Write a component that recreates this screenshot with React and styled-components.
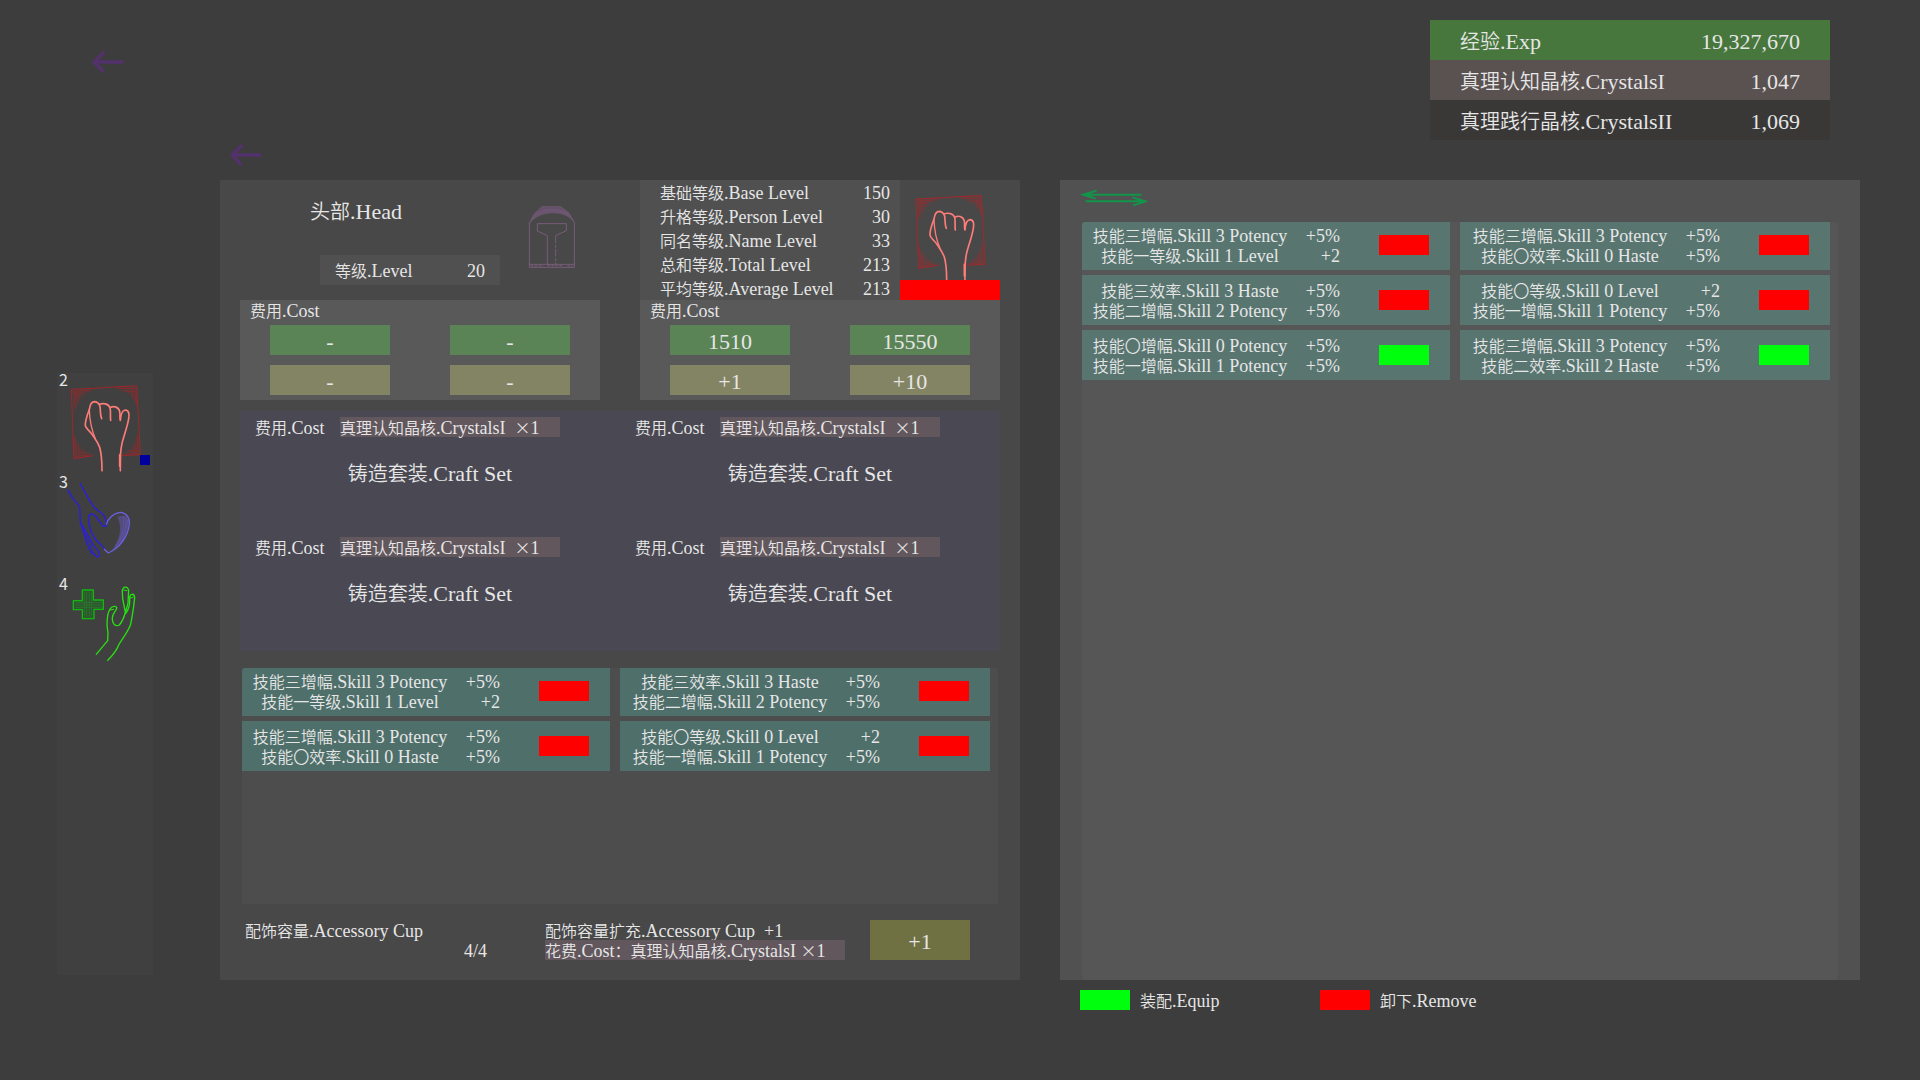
import React from "react";
import styled, { createGlobalStyle } from "styled-components";

const GlobalStyle = createGlobalStyle`
    * {
        box-sizing: border-box;
    }
    body {
        margin: 0;
        background: #3d3d3d;
        color: #e6e6e6;
        font-family: "Noto Sans CJK SC", sans-serif;
        font-size: 16px;
        line-height: 20px;
    }
    button {
        border: 0;
        padding: 0;
        background: none;
        color: inherit;
        font: inherit;
        cursor: pointer;
    }
    svg {
        display: block;
        fill: none;
    }
    dl, dt, dd, h1, h2, ul {
        margin: 0;
        padding: 0;
        font-weight: normal;
        list-style: none;
    }
`;

const Latin = styled.span`
    font-family: "Liberation Serif", serif;
    font-size: ${props => (props.$big ? 22 : 18)}px;
    line-height: 0;
`;

const Line = styled.span`
    font-size: ${props => (props.$big ? 20 : 16)}px;
    font-weight: 350;
    white-space: pre;
`;

// Latin letters are set in a serif, a little larger than the Chinese beside them
const Text = ({ children, big }) => (
    <Line $big={big}>
        {children
            .split(/([\u2e80-\u9fff\uff1a×]+)/)
            .filter(part => part)
            .map((part, index) =>
                /[\u2e80-\u9fff\uff1a×]/.test(part) ? (
                    part
                ) : (
                    <Latin key={index} $big={big}>
                        {part}
                    </Latin>
                )
            )}
    </Line>
);

const Page = styled.div`
    min-height: 100vh;
`;

const Header = styled.header`
    display: flex;
    justify-content: space-between;
    align-items: flex-start;
    padding: 20px 90px 0 91px;
`;

const BackButton = styled.button`
    display: block;
    margin-top: ${props => props.$top}px;
`;

const Resources = styled.dl`
    width: 400px;
`;

const Resource = styled.div`
    display: flex;
    justify-content: space-between;
    align-items: center;
    height: 40px;
    padding: 2px 30px 0;
    background: ${props => props.$color};
`;

const SubHeader = styled.div`
    display: flex;
    height: 40px;
    padding-left: 229px;
`;

const Main = styled.main`
    display: flex;
    align-items: flex-start;
    padding: 0 60px 0 57px;
`;

const Sidebar = styled.nav`
    flex: none;
    width: 96px;
    min-height: 602px;
    margin: 193px 67px 0 0;
    background: #404040;
`;

const ClassButton = styled.button`
    display: block;
    position: relative;
    width: 96px;
    height: 102px;
`;

const ClassNumber = styled.span`
    position: absolute;
    top: -4px;
    left: 2px;
    font-size: 16px;
`;

const Selected = styled.span`
    position: absolute;
    top: 82px;
    right: 3px;
    width: 10px;
    height: 10px;
    background: #00009c;
`;

const Columns = styled.div`
    flex: 1;
    display: grid;
    grid-template-columns: 1fr 1fr;
    align-items: start;
    gap: 40px;
`;

const Panel = styled.section`
    display: flex;
    flex-direction: column;
    min-height: 800px;
    background: ${props => props.$color};
    padding: ${props => props.$padding};
`;

const Halves = styled.div`
    display: grid;
    grid-template-columns: 1fr 1fr;
    gap: ${props => props.$gap || 0}px;
`;

const HeadInfo = styled.div`
    display: grid;
    grid-template-columns: 1fr 50px;
    column-gap: 27px;
    height: 120px;
    padding: 20px 23px 0 70px;
`;

const HeadTitle = styled.h1`
    height: 55px;
    font-size: 20px;
    line-height: 22px;
`;

const LevelBox = styled.div`
    display: flex;
    justify-content: space-between;
    width: 180px;
    margin-left: 10px;
    padding: 5px 15px;
    background: #505050;
`;

const HelmetSlot = styled.div`
    padding-top: 5px;
`;

const Identity = styled.div`
    display: flex;
    height: 120px;
`;

const Stats = styled.dl`
    flex: 1;
    background: #505050;
`;

const Stat = styled.div`
    display: flex;
    justify-content: space-between;
    padding: 2px 10px 2px 20px;
`;

const Portrait = styled.div`
    width: 100px;
`;

const PortraitBar = styled.div`
    height: 20px;
    background: #ff0000;
`;

const CostBox = styled.div`
    height: 100px;
    background: #595959;
`;

const CostTitle = styled.h2`
    height: 25px;
    padding-left: 10px;
    font-size: 16px;
`;

const CostGrid = styled.div`
    display: grid;
    grid-template-columns: 1fr 1fr;
    gap: 10px 0;
    justify-items: center;
`;

const CostValue = styled.div`
    display: flex;
    justify-content: center;
    align-items: center;
    width: 120px;
    height: 30px;
    padding-top: 2px;
    background: #5b8456;
`;

const CostButton = styled.button`
    width: ${props => (props.$tall ? 100 : 120)}px;
    height: ${props => (props.$tall ? 40 : 30)}px;
    padding-top: 2px;
    background: ${props => (props.$tall ? "#707142" : "#838464")};
`;

const CraftGrid = styled(Halves)`
    margin: 11px 0 15px;
    background: #4a4852;
`;

const Craft = styled.div`
    height: 120px;
    padding: 6px 0 0 15px;
`;

const CraftCost = styled.div`
    display: grid;
    grid-template-columns: 85px 220px;
`;

const Crystal = styled.div`
    height: 20px;
    background: #61575d;
`;

const CraftButton = styled.button`
    display: block;
    width: 350px;
    max-width: 100%;
    height: 30px;
    margin-top: 21px;
`;

// the list shows only what lies inside its rounded window
const SkillList = styled.ul`
    display: grid;
    grid-template-columns: 1fr 1fr;
    grid-auto-rows: 50px;
    gap: 5px 10px;
    flex: 1;
    padding-right: 10px;
    background: ${props => props.$color};
    clip-path: inset(2px 2px ${props => props.$bottom}px round 3px);
`;

const SkillCard = styled.li`
    display: grid;
    grid-template-columns: 200px 1fr 50px;
    align-items: center;
    padding: 0 21px 0 10px;
    background: ${props => props.$color};
`;

const SkillNames = styled.div`
    display: grid;
    justify-items: center;
`;

const SkillValues = styled.div`
    display: grid;
    justify-items: end;
    padding-right: 39px;
`;

const Swatch = styled.span`
    display: block;
    width: 50px;
    height: 20px;
    background: ${props => (props.$equip ? "#00ff0c" : "#ff0000")};
`;

const Footer = styled.div`
    display: grid;
    grid-template-columns: 300px 1fr 100px;
    height: 74px;
    padding: 14px 30px 0 5px;
`;

const Capacity = styled.div`
    display: grid;
    grid-template-rows: 20px 20px;
    width: 242px;
`;

const Count = styled.div`
    text-align: right;
`;

const Extension = styled.div`
    display: grid;
    grid-template-rows: 20px 20px;
    width: 300px;
`;

const SwapButton = styled.button`
    align-self: flex-start;
    height: 31px;
    display: flex;
`;

const Legend = styled.div`
    display: flex;
    padding: 10px 20px;
`;

const LegendItem = styled.div`
    display: flex;
    gap: 10px;
    width: 240px;
`;

const BackArrow = () => (
    <svg width="33" height="22" viewBox="57 42 99 66" stroke="#53316b" strokeWidth="11">
        <path d="M155 75H68M97 45L67 75L94 105" />
    </svg>
);

const SwapArrows = () => (
    <svg width="67" height="18" viewBox="88 57 201 54" stroke="#10954a" strokeWidth="6">
        <path d="M272 74H104M138 62L98 74L135 86M105 94H282M245 82L285 94L247 106" />
    </svg>
);

const Helmet = () => (
    <svg width="50" height="64" viewBox="951 225 150 192" stroke="#795c7a" strokeWidth="3">
        <path
            d="M958 280L972 252L996 230H1052L1076 248L1092 276C1070 240 990 236 958 280Z"
            fill="#65516a"
            strokeWidth="2"
        />
        <path d="M964 270C985 235 1065 232 1088 268M975 256C1000 232 1050 232 1080 256" strokeWidth="2" />
        <path d="M958 278V412H1093V276M958 403H1093" />
        <path d="M1012 403V317L982 303V281H1069V302L1037 317" />
        <path d="M1037 317V403" strokeDasharray="22 5 9 4" />
        <path d="M962 408H1000M1012 407H1060M1072 408H1088" strokeDasharray="8 4" />
    </svg>
);

const Fist = ({ width, height, viewBox }) => (
    <svg width={width} height={height} viewBox={viewBox}>
        <g fill="#c02428" fillOpacity="0.16">
            <path d="M95 89L172 86C135 96 113 118 105 162Z" />
            <path d="M215 82L289 79L293 150C284 112 262 92 215 82Z" />
            <path d="M100 212C108 250 128 276 164 284L103 295Z" />
            <path d="M294 212C290 245 272 272 246 283L299 283Z" />
        </g>
        <g stroke="#d0181e" strokeWidth="2">
            <path d="M94 88L160 85L235 80L290 78L294 150L301 284L246 287M94 88L97 170L102 296L160 287" />
            <g strokeWidth="3" opacity="0.4">
                <path d="M99 94L152 91M101 102L130 99M102 94L105 145M110 96L112 126M118 98L119 112" />
                <path d="M232 86L284 86M252 93L284 95M284 88L289 135M275 90L280 116" />
                <path d="M104 230L109 288M113 255L119 286M106 290L150 284M122 277L138 280" />
                <path d="M292 226L293 279M283 252L285 279M254 282L296 280M266 273L290 272" />
            </g>
        </g>
        <g stroke="#fb7c78" strokeWidth="5" strokeLinecap="round" strokeLinejoin="round">
            <path d="M186 332C186 302 184 280 179 262C173 246 165 236 157 224C149 212 137 206 136 196C135 182 142 164 148 148C150 134 155 125 164 125C173 126 178 132 180 140C182 154 180 166 185 176" />
            <path d="M148 150C149 182 155 210 166 236" strokeWidth="4" />
            <path d="M178 133C188 129 205 130 210 143C213 156 210 168 212 181" />
            <path d="M211 143C219 137 235 139 239 154C241 166 238 174 241 181C242 164 248 151 256 150C268 151 268 164 266 176C262 202 251 228 246 250C240 276 240 300 241 332" />
            <path d="M240 285V318" strokeWidth="7" />
        </g>
    </svg>
);

const HeartHand = () => (
    <svg width="96" height="102" viewBox="51 345 288 306" strokeLinejoin="round">
        <path
            d="M232 470C258 462 268 474 266 494C262 530 244 556 214 573C240 540 248 502 232 470Z"
            fill="#6a5cc8"
            fillOpacity="0.45"
        />
        <g stroke="#2a1fe0" strokeWidth="4">
            <path d="M82 388L99 415L119 440L121 487L132 520L142 552L153 577L164 584L171 591L178 588L177 575L160 556L146 530L121 487" />
            <path d="M120 369L145 415L162 442L190 464L198 480L199 498L190 499L178 483L166 467L153 461L146 467L146 486L153 515L166 538L184 556L195 568" />
            <path d="M130 512L150 552L160 580" strokeWidth="3" />
        </g>
        <g stroke="#6c60e0" strokeWidth="4">
            <path d="M199 494C203 476 220 459 242 457C262 460 270 476 268 492C264 532 238 564 205 579L192 567" />
            <path d="M258 467C262 500 248 540 224 564M250 466C256 500 244 534 226 558M262 480C262 510 252 532 240 550" strokeWidth="1" />
        </g>
    </svg>
);

const HealHand = () => (
    <svg width="96" height="102" viewBox="51 651 288 306" strokeLinejoin="round">
        <path
            d="M127 690H160V720H190V748H162V776H127V749H100V722H127Z"
            fill="#2d572e"
            stroke="#10b810"
            strokeWidth="4"
        />
        <path
            d="M133 696V770M140 696V770M148 696V770M155 696V770M106 728H186M106 735H186M106 742H186"
            stroke="#2f7a30"
            strokeWidth="2"
        />
        <g stroke="#27e012" strokeWidth="4">
            <path d="M168 884L203 842L204 820L201 795C201 775 204 755 211 746C217 738 231 737 230 744C229 753 218 758 217 774C217 795 228 800 238 795C247 784 252 775 256 756L248 716L247 692C249 678 262 678 266 690L264 730L256 758" />
            <path d="M256 762C266 750 270 730 269 713C270 700 283 699 284 713C281 740 278 768 271 796C260 822 243 842 236 855C230 872 214 890 202 902" />
            <path d="M208 750L222 748M250 690L262 692M271 714L280 712" strokeWidth="3" />
        </g>
    </svg>
);

const stats = [
    ["基础等级.Base Level", "150"],
    ["升格等级.Person Level", "30"],
    ["同名等级.Name Level", "33"],
    ["总和等级.Total Level", "213"],
    ["平均等级.Average Level", "213"]
];

const resources = [
    ["经验.Exp", "19,327,670", "#47773d"],
    ["真理认知晶核.CrystalsI", "1,047", "#5a5151"],
    ["真理践行晶核.CrystalsII", "1,069", "#393837"]
];

const skills = [
    [["技能三增幅.Skill 3 Potency", "+5%"], ["技能一等级.Skill 1 Level", "+2"]],
    [["技能三效率.Skill 3 Haste", "+5%"], ["技能二增幅.Skill 2 Potency", "+5%"]],
    [["技能三增幅.Skill 3 Potency", "+5%"], ["技能〇效率.Skill 0 Haste", "+5%"]],
    [["技能〇等级.Skill 0 Level", "+2"], ["技能一增幅.Skill 1 Potency", "+5%"]],
    [["技能〇增幅.Skill 0 Potency", "+5%"], ["技能一增幅.Skill 1 Potency", "+5%"]],
    [["技能三增幅.Skill 3 Potency", "+5%"], ["技能二效率.Skill 2 Haste", "+5%"]]
];

const equipped = [skills[0], skills[1], skills[2], skills[3]];
const owned = [skills[0], skills[2], skills[1], skills[3], skills[4], skills[5]];

const Skill = ({ lines, color, equip }) => (
    <SkillCard $color={color}>
        <SkillNames>
            {lines.map(([name]) => (
                <Text key={name}>{name}</Text>
            ))}
        </SkillNames>
        <SkillValues>
            {lines.map(([name, value]) => (
                <Text key={name}>{value}</Text>
            ))}
        </SkillValues>
        <button type="button" aria-label={equip ? "装配.Equip" : "卸下.Remove"}>
            <Swatch $equip={equip} />
        </button>
    </SkillCard>
);

const Cost = ({ values, actions }) => (
    <CostBox>
        <CostTitle>
            <Text>费用.Cost</Text>
        </CostTitle>
        <CostGrid>
            {values.map((value, index) => (
                <CostValue key={index}>
                    <Text big>{value}</Text>
                </CostValue>
            ))}
            {actions.map((action, index) => (
                <CostButton key={index} type="button">
                    <Text big>{action}</Text>
                </CostButton>
            ))}
        </CostGrid>
    </CostBox>
);

const HeadPanel = () => (
    <Panel $color="#484848" $padding="0 20px">
        <Halves $gap={40}>
            <div>
                <HeadInfo>
                    <div>
                        <HeadTitle>
                            <Text big>头部.Head</Text>
                        </HeadTitle>
                        <LevelBox>
                            <Text>等级.Level</Text>
                            <Text>20</Text>
                        </LevelBox>
                    </div>
                    <HelmetSlot>
                        <Helmet />
                    </HelmetSlot>
                </HeadInfo>
                <Cost values={["-", "-"]} actions={["-", "-"]} />
            </div>
            <div>
                <Identity>
                    <Stats>
                        {stats.map(([name, value]) => (
                            <Stat key={name}>
                                <dt>
                                    <Text>{name}</Text>
                                </dt>
                                <dd>
                                    <Text>{value}</Text>
                                </dd>
                            </Stat>
                        ))}
                    </Stats>
                    <Portrait>
                        <Fist width="100" height="100" viewBox="46 31 300 300" />
                        <PortraitBar />
                    </Portrait>
                </Identity>
                <Cost values={["1510", "15550"]} actions={["+1", "+10"]} />
            </div>
        </Halves>
        <CraftGrid>
            {[1, 2, 3, 4].map(slot => (
                <Craft key={slot}>
                    <CraftCost>
                        <Text>费用.Cost</Text>
                        <Crystal>
                            <Text>{"真理认知晶核.CrystalsI  ×1"}</Text>
                        </Crystal>
                    </CraftCost>
                    <CraftButton type="button">
                        <Text big>铸造套装.Craft Set</Text>
                    </CraftButton>
                </Craft>
            ))}
        </CraftGrid>
        <SkillList $color="#4d4d4d" $bottom={2}>
            {equipped.map((lines, index) => (
                <Skill key={index} lines={lines} color="#4e6f6a" />
            ))}
        </SkillList>
        <Footer>
            <Capacity>
                <Text>配饰容量.Accessory Cup</Text>
                <Count>
                    <Text>4/4</Text>
                </Count>
            </Capacity>
            <Extension>
                <Text>{"配饰容量扩充.Accessory Cup  +1"}</Text>
                <Crystal>
                    <Text>花费.Cost：真理认知晶核.CrystalsI ×1</Text>
                </Crystal>
            </Extension>
            <CostButton type="button" $tall>
                <Text big>+1</Text>
            </CostButton>
        </Footer>
    </Panel>
);

const AccessoryPanel = () => (
    <div>
        <Panel $color="#515151" $padding="9px 20px 0">
            <SwapButton type="button" aria-label="Swap">
                <SwapArrows />
            </SwapButton>
            <SkillList $color="#565656" $bottom={0}>
                {owned.map((lines, index) => (
                    <Skill key={index} lines={lines} color="#587570" equip={index > 3} />
                ))}
            </SkillList>
        </Panel>
        <Legend>
            <LegendItem>
                <Swatch $equip />
                <Text>装配.Equip</Text>
            </LegendItem>
            <LegendItem>
                <Swatch />
                <Text>卸下.Remove</Text>
            </LegendItem>
        </Legend>
    </div>
);

const App = () => (
    <>
        <GlobalStyle />
        <Page>
            <Header>
                <BackButton type="button" aria-label="Back" $top={31}>
                    <BackArrow />
                </BackButton>
                <Resources>
                    {resources.map(([name, value, color]) => (
                        <Resource key={name} $color={color}>
                            <dt>
                                <Text big>{name}</Text>
                            </dt>
                            <dd>
                                <Text big>{value}</Text>
                            </dd>
                        </Resource>
                    ))}
                </Resources>
            </Header>
            <SubHeader>
                <div>
                    <BackButton type="button" aria-label="Back" $top={4}>
                        <BackArrow />
                    </BackButton>
                </div>
            </SubHeader>
            <Main>
                <Sidebar>
                    <ClassButton type="button">
                        <Fist width="96" height="102" viewBox="51 39 288 306" />
                        <ClassNumber>2</ClassNumber>
                        <Selected />
                    </ClassButton>
                    <ClassButton type="button">
                        <HeartHand />
                        <ClassNumber>3</ClassNumber>
                    </ClassButton>
                    <ClassButton type="button">
                        <HealHand />
                        <ClassNumber>4</ClassNumber>
                    </ClassButton>
                </Sidebar>
                <Columns>
                    <HeadPanel />
                    <AccessoryPanel />
                </Columns>
            </Main>
        </Page>
    </>
);

export default App;
